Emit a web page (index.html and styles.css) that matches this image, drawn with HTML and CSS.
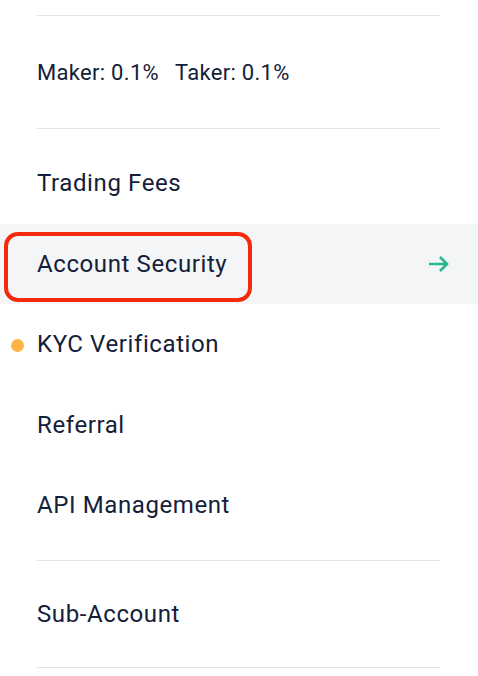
FILE: index.html
```html
<!DOCTYPE html>
<html lang="en">
<head>
  <meta charset="UTF-8">
  <meta name="viewport" content="width=device-width, initial-scale=1.0">
  <title>Account Menu</title>
  <link rel="stylesheet" href="styles.css">
</head>
<body>
<div class="menu">
  <!-- fee summary -->
  <div class="fees">
    <span>Maker: 0.1%</span>
    <span>Taker: 0.1%</span>
  </div>

  <ul class="group">
    <li class="item">Trading Fees</li>
    <li class="item active">
      <span class="label">Account Security</span>
      <span class="mark"></span>
      <svg class="arrow" width="22" height="18" viewBox="0 0 22 18">
        <path d="M1 9 H19 M12 2 L19 9 L12 16" fill="none" stroke="#22b98b" stroke-width="2.6"/>
      </svg>
    </li>
    <li class="item"><span class="dot"></span>KYC Verification</li>
    <li class="item">Referral</li>
    <li class="item">API Management</li>
  </ul>

  <ul class="group">
    <li class="item">Sub-Account</li>
  </ul>
</div>
</body>
</html>
```

FILE: styles.css
```css
body {
  margin: 0;
  background-color: #fff;
  color: #142039;
  font-family: Roboto, "Noto Sans", sans-serif;
}
.menu {
  padding-top: 15px;
}
.fees {
  display: flex;
  gap: 16px;
  align-items: center;
  height: 112px;
  margin: 0 38px 0 37px;
  border-top: 1px solid #e3e4e8;
  border-bottom: 1px solid #e3e4e8;
  font-size: 22px;
  letter-spacing: 0.3px;
}
.group {
  list-style: none;
  margin: 0;
  padding: 14px 0;
}
.group + .group {
  border-top: 1px solid #e3e4e8;
  margin: 0 38px 0 37px;
  border-bottom: 1px solid #e3e4e8;
  padding: 13px 0;
}
.group + .group .item {
  padding-left: 0;
}
.item {
  position: relative;
  display: flex;
  align-items: center;
  height: 80.5px;
  padding-left: 37px;
  font-size: 24px;
  letter-spacing: 0.6px;
}
.item.active {
  background-color: #f4f5f7;
}
.arrow {
  position: absolute;
  right: 28px;
  top: 31px;
}
/* red annotation outline */
.mark {
  position: absolute;
  left: 4px;
  top: 8px;
  width: 240px;
  height: 62px;
  border: 4px solid #f52a0c;
  border-radius: 14px;
}
.dot {
  position: absolute;
  left: 11px;
  top: 35px;
  width: 13px;
  height: 13px;
  border-radius: 50%;
  background-color: #fdb445;
}
```
